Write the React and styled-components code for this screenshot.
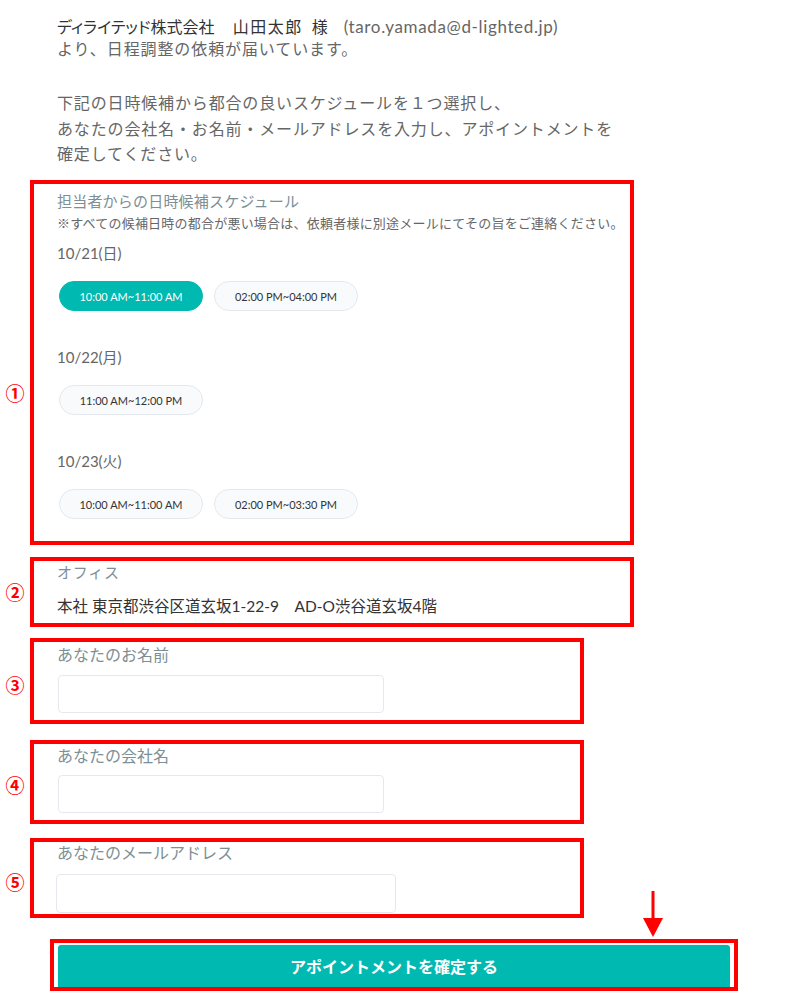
import React from "react";
import styled, { createGlobalStyle } from "styled-components";

const GlobalStyle = createGlobalStyle`
  html, body { margin: 0; padding: 0; background: #fff; }
  body {
    font-family: Lato, "Noto Sans CJK JP", sans-serif;
    color: #666;
  }
  * { box-sizing: border-box; }
`;

const Page = styled.div`
  width: 800px;
  padding-top: 16px;
  padding-bottom: 15px;
  display: flex;
  flex-direction: column;
`;

const Intro = styled.div`
  padding-left: 57px;
  font-size: 16px;
`;

const Sender = styled.p`
  margin: 0;
  display: flex;
  align-items: baseline;
  line-height: 22px;
  color: #333;
  font-feature-settings: "palt";
  white-space: nowrap;
`;

const Part = styled.span`
  margin-left: ${(p) => p.$ml || 0}px;
  letter-spacing: ${(p) => p.$ls || 0}px;
`;

const Email = styled.span`
  margin-left: 16px;
  color: #666;
  font-size: 17px;
  letter-spacing: 0.65px;
`;

const IntroLine = styled.p`
  margin: 0;
  line-height: 22px;
  letter-spacing: 0.9px;
`;

const Instruction = styled.p`
  margin: 30px 0 0;
  line-height: 25.5px;
  letter-spacing: 0.85px;
`;

const Row = styled.div`
  display: flex;
  align-items: center;
  margin-top: ${(p) => p.$gap}px;
  padding-left: ${(p) => p.$indent || 0}px;
`;

const Marker = styled.span`
  width: 30px;
  flex: none;
  text-align: center;
  color: #ff0000;
  font-family: "Noto Sans CJK JP", sans-serif;
  font-weight: 700;
  font-size: 19px;
  line-height: 20px;
  margin-top: ${(p) => (p.$nudge || 0) * 2}px;
`;

const Box = styled.section`
  position: relative;
  width: ${(p) => p.$w}px;
  border: 4px solid #ff0000;
  padding: ${(p) => p.$pad};
  display: flex;
  flex-direction: column;
`;

const SectionTitle = styled.div`
  font-size: 15px;
  line-height: 22px;
  color: #7d8f95;
  letter-spacing: ${(p) => p.$ls || 0}px;
`;

const Note = styled.div`
  margin-top: 1px;
  font-size: 13px;
  line-height: 20px;
  letter-spacing: 0.22px;
  white-space: nowrap;
  color: #666;
`;

const DateLabel = styled.div`
  margin-top: ${(p) => p.$mt}px;
  font-size: 15px;
  line-height: 22px;
  color: #666;
`;

const Slots = styled.div`
  display: flex;
  gap: 11px;
  margin-top: 17px;
  padding-left: 2px;
`;

const Slot = styled.button`
  width: 144px;
  height: 30px;
  padding: 0;
  border-radius: 15px;
  border: 1px solid ${(p) => (p.$selected ? "#00b9b1" : "#e4e9ef")};
  background: ${(p) => (p.$selected ? "#00b9b1" : "#f8fafc")};
  color: ${(p) => (p.$selected ? "#fff" : "#333")};
  font-family: Lato, "Noto Sans CJK JP", sans-serif;
  font-size: 11px;
  cursor: pointer;
`;

const Address = styled.div`
  margin-top: 12px;
  font-size: 15.5px;
  line-height: 22px;
  color: #333;
`;

const FieldLabel = styled.label`
  font-size: 16px;
  line-height: 22px;
  color: #7d8f95;
`;

const TextInput = styled.input`
  display: block;
  margin-top: ${(p) => p.$mt}px;
  margin-left: ${(p) => p.$ml}px;
  width: ${(p) => p.$w}px;
  height: ${(p) => p.$h}px;
  border: 1px solid #e5e9ee;
  border-radius: 4px;
  background: #fff;
  font-family: Lato, "Noto Sans CJK JP", sans-serif;
  font-size: 14px;
  padding: 0 10px;
  outline: none;
`;

const SubmitButton = styled.button`
  height: 42px;
  width: 100%;
  border: none;
  border-radius: 3px 3px 0 0;
  background: #00b9b1;
  color: #fff;
  font-family: "Noto Sans CJK JP", sans-serif;
  font-weight: 700;
  font-size: 16px;
  cursor: pointer;
`;

const Arrow = styled.svg`
  position: absolute;
  left: 589px;
  top: -52px;
`;

const dates = [
  {
    label: "10/21(日)",
    mt: 9,
    slots: [
      { t: "10:00 AM~11:00 AM", selected: true },
      { t: "02:00 PM~04:00 PM" },
    ],
  },
  { label: "10/22(月)", mt: 35, slots: [{ t: "11:00 AM~12:00 PM" }] },
  {
    label: "10/23(火)",
    mt: 35,
    slots: [{ t: "10:00 AM~11:00 AM" }, { t: "02:00 PM~03:30 PM" }],
  },
];

export default function App() {
  return (
    <>
      <GlobalStyle />
      <Page>
        <Intro>
          <Sender>
            <Part>ディライテッド株式会社</Part>
            <Part $ml={18} $ls={1.5}>山田太郎</Part>
            <Part $ml={9}>様</Part>
            <Email>(taro.yamada@d-lighted.jp)</Email>
          </Sender>
          <IntroLine>より、日程調整の依頼が届いています。</IntroLine>
          <Instruction>
            下記の日時候補から都合の良いスケジュールを１つ選択し、
            <br />
            あなたの会社名・お名前・メールアドレスを入力し、アポイントメントを
            <br />
            確定してください。
          </Instruction>
        </Intro>

        <Row $gap={13.5}>
          <Marker $nudge={30.5}>①</Marker>
          <Box $w={604} $pad="6px 0 22px 23px">
            <SectionTitle $ls={0.2}>担当者からの日時候補スケジュール</SectionTitle>
            <Note>
              ※すべての候補日時の都合が悪い場合は、依頼者様に別途メールにてその旨をご連絡ください。
            </Note>
            {dates.map((d) => (
              <React.Fragment key={d.label}>
                <DateLabel $mt={d.mt}>{d.label}</DateLabel>
                <Slots>
                  {d.slots.map((s) => (
                    <Slot key={s.t} $selected={s.selected}>
                      {s.t}
                    </Slot>
                  ))}
                </Slots>
              </React.Fragment>
            ))}
          </Box>
        </Row>

        <Row $gap={12}>
          <Marker>②</Marker>
          <Box $w={604} $pad="0 20px 6px 23px">
            <SectionTitle $ls={0.8}>オフィス</SectionTitle>
            <Address>本社 東京都渋谷区道玄坂1-22-9　AD-O渋谷道玄坂4階</Address>
          </Box>
        </Row>

        <Row $gap={11}>
          <Marker $nudge={4}>③</Marker>
          <Box $w={554} $pad="2px 20px 7px 23px">
            <FieldLabel>あなたのお名前</FieldLabel>
            <TextInput $mt={9} $ml={1} $w={326} $h={38} />
          </Box>
        </Row>

        <Row $gap={16}>
          <Marker $nudge={3}>④</Marker>
          <Box $w={554} $pad="1px 20px 7px 23px">
            <FieldLabel>あなたの会社名</FieldLabel>
            <TextInput $mt={8} $ml={1} $w={326} $h={38} />
          </Box>
        </Row>

        <Row $gap={14}>
          <Marker $nudge={4}>⑤</Marker>
          <Box $w={554} $pad="0 20px 1px 23px">
            <FieldLabel>あなたのメールアドレス</FieldLabel>
            <TextInput $mt={10} $ml={-1} $w={340} $h={39} type="email" />
          </Box>
        </Row>

        <Row $gap={21} $indent={50}>
          <Box $w={688} $pad="2px 4px 0 4px">
            <Arrow width="20" height="47" viewBox="0 0 20 47">
              <line x1="10" y1="0" x2="10" y2="28" stroke="#ff0000" strokeWidth="3" />
              <polygon points="0,27 20,27 10,46" fill="#ff0000" />
            </Arrow>
            <SubmitButton>アポイントメントを確定する</SubmitButton>
          </Box>
        </Row>
      </Page>
    </>
  );
}
